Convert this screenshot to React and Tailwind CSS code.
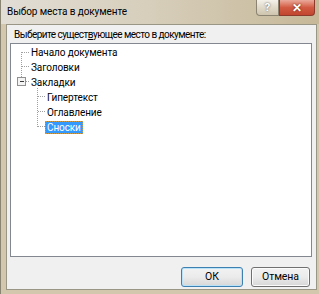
import React from "react";

const font = { fontFamily: 'Roboto, "Noto Sans", "Liberation Sans", sans-serif' };

const TreeLines = () => (
  <svg className="absolute left-0 top-0 pointer-events-none" width="80" height="100" shapeRendering="crispEdges">
    <g stroke="#a0a0a0" strokeWidth="1" strokeDasharray="1 1" fill="none">
      <line x1="10.5" y1="8" x2="10.5" y2="33" />
      <line x1="11" y1="8.5" x2="18" y2="8.5" />
      <line x1="11" y1="22.5" x2="18" y2="22.5" />
      <line x1="15" y1="37.5" x2="18" y2="37.5" />
      <line x1="26.5" y1="44" x2="26.5" y2="83" />
      <line x1="27" y1="52.5" x2="34" y2="52.5" />
      <line x1="27" y1="67.5" x2="34" y2="67.5" />
      <line x1="27" y1="82.5" x2="34" y2="82.5" />
    </g>
    <rect x="6.5" y="33.5" width="8" height="8" fill="#f4f4f4" stroke="#919191" />
    <line x1="8.5" y1="37.5" x2="13" y2="37.5" stroke="#3a3a3a" />
  </svg>
);

const Row = ({ indent, label, selected }) => (
  <div className={`flex items-center h-[15px] ${indent ? "pl-[34px]" : "pl-[18px]"}`}>
    <span
      className={`px-[2px] leading-[13px] h-[13px] ${
        selected ? "bg-[#3399ff] text-white outline-1 outline-dotted outline-[#c89a4a] -outline-offset-1" : "text-black"
      }`}
    >
      {label}
    </span>
  </div>
);

const TitleButton = ({ children, red }) => (
  <div
    className={`h-[16px] flex items-center justify-center border border-t-0 ${
      red
        ? "w-[36px] rounded-br-[4px] border-[#8d3a2c] bg-gradient-to-b from-[#e9a99b] via-[#d25a42] to-[#c2452f]"
        : "w-[23px] rounded-bl-[4px] border-[#8b8473] bg-gradient-to-b from-[#f4f1ea] via-[#e0d9c9] to-[#cfc5ae]"
    }`}
  >
    {children}
  </div>
);

const Button = ({ children, primary }) => (
  <button
    className={`h-[20px] rounded-[3px] border text-[10.5px] text-black flex items-center justify-center bg-gradient-to-b from-[#f2f2f2] via-[#ebebeb] to-[#d6d6d6] ${
      primary ? "w-[62px] border-[#3c7fb1] shadow-[inset_0_0_0_1px_#b9e2f8]" : "w-[59px] border-[#707070] shadow-[inset_0_0_0_1px_#fbfbfb]"
    }`}
    style={font}
  >
    {children}
  </button>
);

export default function App() {
  return (
    <div
      className="w-[319px] h-[294px] overflow-hidden flex flex-col bg-[#d3c8ad] border-l border-[#8a8472] text-[10px] tracking-[-0.1px]"
      style={font}
    >
      <div className="h-[24px] shrink-0 flex items-start justify-between bg-gradient-to-r from-[#e2ded6] via-[#d6cdb9] to-[#c6b898]">
        <div className="pl-[6px] pt-[5px] text-[10px] tracking-[-0.1px] text-black leading-[14px]">Выбор места в документе</div>
        <div className="flex mr-[4px]">
          <TitleButton>
            <span className="text-[11px] font-bold text-white leading-none [text-shadow:0_0_2px_#4a4a4a]">?</span>
          </TitleButton>
          <TitleButton red>
            <span className="text-[12px] font-bold text-white leading-none [text-shadow:0_0_2px_#5a1a10]">✕</span>
          </TitleButton>
        </div>
      </div>
      <div className="flex-1 flex pb-[4px] pl-[5px] pr-[2px]">
        <div className="flex-1 flex flex-col bg-[#f0f0f0] border border-[#9a9685]">
          <div className="pl-[7px] pt-[4px] h-[18px] leading-[12px] tracking-[-0.55px] text-black">
            Выберите сущест<span className="underline">в</span>ующее место в документе:
          </div>
          <div className="ml-[3px] mr-[4px] h-[214px] border border-[#828790] bg-white relative pt-[1px]">
            <TreeLines />
            <div className="relative">
              <Row label="Начало документа" />
              <Row label="Заголовки" />
              <Row label="Закладки" />
              <Row indent label="Гипертекст" />
              <Row indent label="Оглавление" />
              <Row indent label="Сноски" selected />
            </div>
          </div>
          <div className="flex justify-end gap-[8px] mt-[10px] mr-[6px]">
            <Button primary>ОК</Button>
            <Button>Отмена</Button>
          </div>
        </div>
      </div>
    </div>
  );
}
